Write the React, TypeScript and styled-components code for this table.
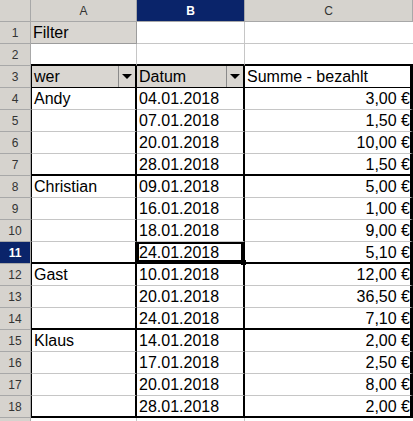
import React from 'react'
import styled, { createGlobalStyle } from 'styled-components'

const HEADER_BG = '#d6d3ce'
const FIELD_BG = '#d9d6d1'
const ACTIVE_BG = '#0a246a'
const GRID = '#c6c6c6'
const BLACK = '#000'

const GlobalStyle = createGlobalStyle`
  html, body {
    margin: 0;
    padding: 0;
    background: #fff;
  }
  body {
    font-family: 'Liberation Sans', Arial, sans-serif;
    overflow: hidden;
  }
`

const Sheet = styled.div`
  display: grid;
  grid-template-columns: 31px 106px 108px 168px;
  grid-auto-rows: 22px;
  width: 413px;
  height: 421px;
  overflow: hidden;
`

const HeadCell = styled.div<{ $active?: boolean; $right?: string }>`
  box-sizing: border-box;
  display: flex;
  align-items: center;
  justify-content: center;
  background: ${(p) => (p.$active ? ACTIVE_BG : HEADER_BG)};
  color: ${(p) => (p.$active ? '#fff' : '#333')};
  font-weight: ${(p) => (p.$active ? 'bold' : 'normal')};
  font-size: 12px;
  border-right: ${(p) => p.$right ?? '1px solid #a8a8a8'};
  border-bottom: 1px solid #a8a8a8;
`

type CellProps = {
  $bg?: string
  $right?: string
  $bottom?: string
  $left?: string
  $align?: 'left' | 'right'
  $selected?: boolean
}

const Cell = styled.div<CellProps>`
  box-sizing: border-box;
  position: relative;
  display: flex;
  align-items: center;
  justify-content: ${(p) => (p.$align === 'right' ? 'flex-end' : 'flex-start')};
  padding: 1px ${(p) => (p.$align === 'right' ? '0' : '3px')} 0 2px;
  font-size: 16px;
  color: #000;
  white-space: nowrap;
  background: ${(p) => p.$bg ?? '#fff'};
  border-right: ${(p) => p.$right ?? `1px solid ${GRID}`};
  border-bottom: ${(p) => p.$bottom ?? `1px solid ${GRID}`};
  border-left: ${(p) => p.$left ?? 'none'};
  box-shadow: ${(p) => (p.$selected ? `inset 0 0 0 2px ${BLACK}` : 'none')};
  z-index: ${(p) => (p.$selected ? 2 : 'auto')};
`

const Label = styled.span`
  flex: 1;
`

const FillHandle = styled.span`
  position: absolute;
  right: -3px;
  bottom: -3px;
  width: 5px;
  height: 5px;
  background: ${BLACK};
`

const DropButton = styled.span`
  box-sizing: border-box;
  align-self: stretch;
  width: 17px;
  margin: -1px -3px 0 0;
  display: flex;
  align-items: center;
  justify-content: center;
  background: ${FIELD_BG};
  border-left: 1px solid #8a8a8a;
`

const Arrow = styled.span`
  width: 0;
  height: 0;
  border-left: 5px solid transparent;
  border-right: 5px solid transparent;
  border-top: 5px solid #000;
`

type Entry = { who?: string; date: string; sum: string; groupEnd?: boolean }

const entries: Entry[] = [
  { who: 'Andy', date: '04.01.2018', sum: '3,00 €' },
  { date: '07.01.2018', sum: '1,50 €' },
  { date: '20.01.2018', sum: '10,00 €' },
  { date: '28.01.2018', sum: '1,50 €', groupEnd: true },
  { who: 'Christian', date: '09.01.2018', sum: '5,00 €' },
  { date: '16.01.2018', sum: '1,00 €' },
  { date: '18.01.2018', sum: '9,00 €' },
  { date: '24.01.2018', sum: '5,10 €', groupEnd: true },
  { who: 'Gast', date: '10.01.2018', sum: '12,00 €' },
  { date: '20.01.2018', sum: '36,50 €' },
  { date: '24.01.2018', sum: '7,10 €', groupEnd: true },
  { who: 'Klaus', date: '14.01.2018', sum: '2,00 €' },
  { date: '17.01.2018', sum: '2,50 €' },
  { date: '20.01.2018', sum: '8,00 €' },
  { date: '28.01.2018', sum: '2,00 €', groupEnd: true },
]

const SELECTED_ROW = 11
const innerV = `2px solid ${BLACK}`
const outerR = `3px solid ${BLACK}`
const groupH = `2px solid ${BLACK}`

export default function App(): JSX.Element {
  return (
    <>
      <GlobalStyle />
      <Sheet>
        <HeadCell />
        <HeadCell>A</HeadCell>
        <HeadCell $active>B</HeadCell>
        <HeadCell>C</HeadCell>

        <HeadCell>1</HeadCell>
        <Cell $bg={FIELD_BG} $right="1px solid #9c9c9c" $bottom="1px solid #9c9c9c">Filter</Cell>
        <Cell />
        <Cell $right="none" />

        <HeadCell>2</HeadCell>
        <Cell $bottom={groupH} />
        <Cell $bottom={groupH} />
        <Cell $bottom={groupH} $right="none" />

        <HeadCell>3</HeadCell>
        <Cell $bg={FIELD_BG} $left={`1px solid ${BLACK}`} $right={innerV} $bottom={`1px solid ${BLACK}`}>
          <Label>wer</Label>
          <DropButton><Arrow /></DropButton>
        </Cell>
        <Cell $bg={FIELD_BG} $right={innerV} $bottom={`1px solid ${BLACK}`}>
          <Label>Datum</Label>
          <DropButton><Arrow /></DropButton>
        </Cell>
        <Cell $right={outerR} $bottom={`1px solid ${BLACK}`}>Summe - bezahlt</Cell>

        {entries.map((e: Entry, i: number): JSX.Element => {
          const row = i + 4
          const bottom = e.groupEnd ? groupH : undefined
          return (
            <React.Fragment key={row}>
              <HeadCell $active={row === SELECTED_ROW}>{row}</HeadCell>
              <Cell $left={`1px solid ${BLACK}`} $right={innerV} $bottom={bottom}>{e.who ?? ''}</Cell>
              <Cell $right={innerV} $bottom={bottom} $selected={row === SELECTED_ROW}>
                {e.date}
                {row === SELECTED_ROW && <FillHandle />}
              </Cell>
              <Cell $right={outerR} $bottom={bottom} $align="right">{e.sum}</Cell>
            </React.Fragment>
          )
        })}

        {/* row 19, only its top edge shows */}
        <HeadCell />
        <Cell />
        <Cell />
        <Cell $right="none" />
      </Sheet>
    </>
  )
}
